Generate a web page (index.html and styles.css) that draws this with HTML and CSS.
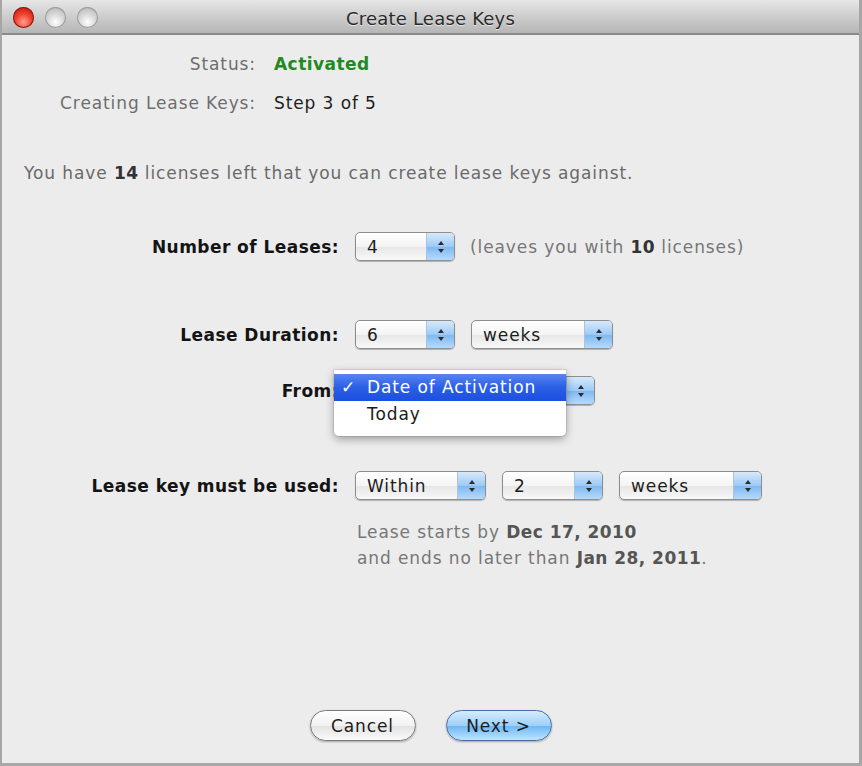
FILE: index.html
```html
<!DOCTYPE html>
<html>
<head>
<meta charset="utf-8">
<link rel="stylesheet" href="styles.css">
</head>
<body>
<div class="window">
  <div class="titlebar">
    <div class="lights">
      <span class="light red"></span>
      <span class="light gray"></span>
      <span class="light gray"></span>
    </div>
    <div class="title">Create Lease Keys</div>
  </div>
  <div class="content">
    <div class="info">
      <div class="info-row"><span class="info-label">Status:</span><span class="info-value green">Activated</span></div>
      <div class="info-row"><span class="info-label">Creating Lease Keys:</span><span class="info-value">Step 3 of 5</span></div>
    </div>
    <p class="intro">You have <b>14</b> licenses left that you can create lease keys against.</p>

    <div class="form-row row-leases">
      <span class="label">Number of Leases:</span>
      <div class="controls">
        <div class="popup w100"><span class="val">4</span><span class="step"><i class="up"></i><i class="down"></i></span></div>
        <span class="hint">(leaves you with <b>10</b> licenses)</span>
      </div>
    </div>

    <div class="form-row row-duration">
      <span class="label">Lease Duration:</span>
      <div class="controls">
        <div class="popup w100"><span class="val">6</span><span class="step"><i class="up"></i><i class="down"></i></span></div>
        <div class="popup w142"><span class="val">weeks</span><span class="step"><i class="up"></i><i class="down"></i></span></div>
      </div>
    </div>

    <div class="form-row row-from">
      <span class="label">From:</span>
      <div class="controls">
        <div class="popup w240 anchor"><span class="val">Date of Activation</span><span class="step"><i class="up"></i><i class="down"></i></span>
          <div class="menu">
            <div class="item selected"><span class="check">✓</span>Date of Activation</div>
            <div class="item">Today</div>
          </div>
        </div>
      </div>
    </div>

    <div class="form-row row-used">
      <span class="label">Lease key must be used:</span>
      <div class="controls">
        <div class="popup w131"><span class="val">Within</span><span class="step"><i class="up"></i><i class="down"></i></span></div>
        <div class="popup w101"><span class="val">2</span><span class="step"><i class="up"></i><i class="down"></i></span></div>
        <div class="popup w143"><span class="val">weeks</span><span class="step"><i class="up"></i><i class="down"></i></span></div>
      </div>
    </div>

    <div class="summary">
      <div>Lease starts by <b>Dec 17, 2010</b></div>
      <div>and ends no later than <b>Jan 28, 2011</b>.</div>
    </div>

    <div class="buttons">
      <button class="btn">Cancel</button>
      <button class="btn default">Next &gt;</button>
    </div>
  </div>
</div>
</body>
</html>
```

FILE: styles.css
```css
* { box-sizing: border-box; }
html, body {
  margin: 0;
  padding: 0;
  width: 862px;
  height: 766px;
  overflow: hidden;
  background: #ececec;
}
body {
  font-family: "DejaVu Sans", "Liberation Sans", sans-serif;
  font-size: 17px;
  letter-spacing: 0.9px;
  color: #222;
}
b { letter-spacing: 0.45px; }
.window {
  width: 862px;
  height: 766px;
  display: flex;
  flex-direction: column;
  border-left: 2px solid #a6a6a6;
  border-right: 3px solid #a6a6a6;
  border-bottom: 3px solid #a9a9a9;
  background: #ececec;
}
.titlebar {
  height: 35px;
  flex: none;
  position: relative;
  display: flex;
  align-items: center;
  justify-content: center;
  background: linear-gradient(#e6e6e6, #cdcdcd 50%, #b6b6b6);
  border-bottom: 2px solid #8a8a8a;
}
.lights {
  position: absolute;
  left: 11px;
  top: 7px;
  display: flex;
  gap: 11px;
}
.light {
  width: 21px;
  height: 21px;
  border-radius: 50%;
  display: block;
}
.light.red {
  background: radial-gradient(circle at 50% 72%, #ffa090 0%, #f0402e 45%, #b0140a 100%);
  box-shadow: inset 0 0 0 1px #8a1a10;
}
.light.gray {
  background: radial-gradient(circle at 50% 72%, #ffffff 0%, #d8d8d8 45%, #a9a9a9 100%);
  box-shadow: inset 0 0 0 1px #9a9a9a;
}
.title {
  font-size: 18px;
  letter-spacing: 0.2px;
  color: #2a2a2a;
  text-shadow: 0 1px 0 rgba(255,255,255,0.6);
  padding-top: 3px;
}
.content {
  flex: 1;
  display: flex;
  flex-direction: column;
}
.info {
  margin-top: 19px;
  display: flex;
  flex-direction: column;
  gap: 19px;
}
.info-row {
  display: flex;
  align-items: center;
  height: 20px;
}
.info-label {
  width: 254px;
  text-align: right;
  color: #6e6e6e;
}
.info-value {
  margin-left: 18px;
  color: #1e1e1e;
}
.info-value.green {
  color: #1f8a1f;
  font-weight: bold;
  letter-spacing: 0.45px;
}
.intro {
  margin: 50px 0 0 22px;
  color: #6a6a6a;
  line-height: 20px;
}
.intro b, .hint b {
  color: #333;
}
.summary b {
  color: #555;
}
.form-row {
  display: flex;
  align-items: center;
}
.label {
  width: 337px;
  text-align: right;
  font-weight: bold;
  letter-spacing: 0.45px;
  color: #141414;
  flex: none;
}
.controls {
  margin-left: 16px;
  display: flex;
  align-items: center;
  gap: 16px;
}
.row-leases { margin-top: 49px; }
.row-duration { margin-top: 59px; }
.row-from { margin-top: 27px; }
.row-used { margin-top: 66px; }
.popup {
  position: relative;
  height: 29px;
  display: flex;
  align-items: center;
  border: 1px solid #8e8e8e;
  border-radius: 5px;
  background: linear-gradient(#ffffff, #f4f4f4 50%, #e6e6e6 51%, #f8f8f8);
  box-shadow: 0 1px 1px rgba(0,0,0,0.25);
  color: #1c1c1c;
}
.w100 { width: 100px; }
.w101 { width: 101px; }
.w131 { width: 131px; }
.w142 { width: 142px; }
.w143 { width: 143px; }
.w240 { width: 240px; }
.val {
  flex: 1;
  padding-left: 11px;
  white-space: nowrap;
  overflow: hidden;
}
.step {
  width: 28px;
  height: 100%;
  border-radius: 0 4px 4px 0;
  border-left: 1px solid #a9c4e0;
  background: linear-gradient(#d8e9fb, #9ccaf6 50%, #7fb7f0 51%, #b4dafc);
  display: flex;
  flex-direction: column;
  align-items: center;
  justify-content: center;
  gap: 4px;
}
.step i {
  display: block;
  width: 0;
  height: 0;
  border-left: 3px solid transparent;
  border-right: 3px solid transparent;
}
.step .up { border-bottom: 4px solid #2b2b2b; }
.step .down { border-top: 4px solid #2b2b2b; }
.hint {
  color: #777;
  margin-left: -1px;
}
.anchor { z-index: 2; }
.menu {
  position: absolute;
  left: -22px;
  top: -7px;
  width: 232px;
  height: 66px;
  background: rgba(255,255,255,0.98);
  border-radius: 0 0 5px 5px;
  box-shadow: 0 3px 8px rgba(0,0,0,0.35), 0 0 0 1px rgba(0,0,0,0.08);
  padding-top: 4px;
}
.item {
  height: 27px;
  line-height: 27px;
  padding-left: 33px;
  position: relative;
  color: #1a1a1a;
  white-space: nowrap;
}
.item.selected {
  background: linear-gradient(#5a84f0, #2a5fe6 50%, #1c4fde);
  color: #fff;
}
.check {
  position: absolute;
  left: 7px;
  top: 0;
  font-weight: bold;
}
.summary {
  margin: 19px 0 0 355px;
  color: #777;
  line-height: 26px;
}
.buttons {
  margin-top: auto;
  margin-bottom: 22px;
  display: flex;
  justify-content: center;
  gap: 30px;
}
.btn {
  width: 106px;
  height: 31px;
  border-radius: 16px;
  border: 1px solid #7a7a7a;
  background: linear-gradient(#ffffff, #f2f2f2 50%, #e2e2e2 51%, #fafafa);
  box-shadow: 0 1px 2px rgba(0,0,0,0.3);
  font-family: "DejaVu Sans", "Liberation Sans", sans-serif;
  font-size: 17px;
  letter-spacing: 0.9px;
  color: #1c1c1c;
  padding: 0;
}
.btn.default {
  border-color: #4a6ea8;
  background: linear-gradient(#d5ecfd, #9fd0f8 50%, #6bb6f4 51%, #bfe4ff);
}
```
